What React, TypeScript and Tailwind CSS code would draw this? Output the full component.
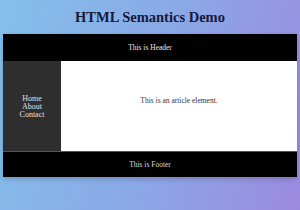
import React from "react";

export default function App() {
  return (
    <div
      className="w-[300px] h-[210px] overflow-hidden bg-[linear-gradient(105deg,#84c0ea_0%,#8aa9e6_50%,#9c8ae0_100%)] px-[3px]"
      style={{ fontFamily: '"Liberation Serif", "Times New Roman", serif' }}
    >
      <h1 className="h-[34px] flex items-center justify-center text-[14.5px] font-bold text-[#151a3a] leading-none">
        HTML Semantics Demo
      </h1>
      <div className="flex flex-col shadow-[0_2px_5px_rgba(0,0,0,0.2)]">
        <div className="h-[27px] bg-black text-[#e8e8e8] text-[7.5px] flex items-center justify-center">
          This is Header
        </div>
        <div className="flex h-[90px]">
          <div className="w-[58px] bg-[#2e2e2e] text-[#e0e0e0] text-[8px] flex flex-col items-center justify-center leading-[8px] pt-[2px]">
            <span>Home</span>
            <span>About</span>
            <span>Contact</span>
          </div>
          <div className="flex-1 bg-white text-[#333] text-[7.5px] flex items-center justify-center pb-[10px]">
            This is an article element.
          </div>
        </div>
        <div className="h-[26px] bg-black text-[#d8d8d8] text-[7.5px] flex items-center justify-center border-t border-[#555]">
          This is Footer
        </div>
      </div>
    </div>
  );
}
